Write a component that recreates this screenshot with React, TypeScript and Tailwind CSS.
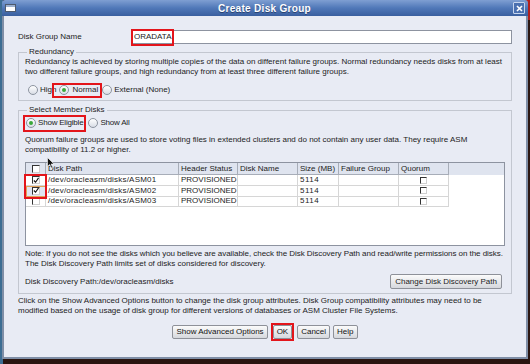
import React from "react";

const F = "font-['Liberation_Sans',Arial,sans-serif]";

function Radio({ on }: { on?: boolean }) {
  return (
    <span className="relative inline-flex h-[10px] w-[10px] shrink-0 items-center justify-center rounded-full border border-[#8d94a0] bg-gradient-to-b from-[#ffffff] to-[#d9dde6]">
      {on && <span className="h-[4px] w-[4px] rounded-full bg-[#3aa83a]" />}
    </span>
  );
}

function Check({ on, small }: { on?: boolean; small?: boolean }) {
  return (
    <span
      className={
        (small ? "h-[7px] w-[7px] " : "h-[8px] w-[8px] ") +
        "inline-flex shrink-0 items-center justify-center border-l border-t border-l-[#333] border-t-[#333] border-r border-b border-r-[#cfcfcf] border-b-[#cfcfcf] bg-white"
      }
    >
      {on && (
        <svg width="7" height="7" viewBox="0 0 7 7">
          <path d="M1 3.5 L3 5.5 L6.5 0.5" stroke="#111" strokeWidth="1.3" fill="none" />
        </svg>
      )}
    </span>
  );
}

function Btn({ children, red }: { children: React.ReactNode; red?: boolean }) {
  return (
    <div className={red ? "border-2 border-[#e3151b] p-0" : ""}>
      <div className="flex h-[14px] items-center rounded-[2px] border border-[#8e9199] bg-gradient-to-b from-[#fbfbfb] to-[#d6d8dd] px-[3px] text-[8px] text-[#111]">
        {children}
      </div>
    </div>
  );
}

const rows = ["/dev/oracleasm/disks/ASM01", "/dev/oracleasm/disks/ASM02", "/dev/oracleasm/disks/ASM03"];

export default function App() {
  return (
    <div className={`${F} relative h-[364px] w-[530px] overflow-hidden bg-[#2a1510]`}>
      <div className="absolute left-0 top-0 h-[364px] w-[3px] bg-[#3c6d93]" />
      <div className="absolute right-0 top-0 h-[20px] w-[4px] bg-[#b3201c]" />
      <div className="relative ml-[2px] flex h-[359px] w-[526px] flex-col">
        {/* title bar */}
        <div className="flex h-[16px] items-center rounded-t-[3px] bg-gradient-to-b from-[#7f9fd2] via-[#5078b8] to-[#3a5f9f] px-[3px]">
          <div className="flex h-[8px] w-[11px] flex-col border border-[#4d5a6e] bg-white">
            <div className="h-[2px] bg-[#9bb0cf]" />
          </div>
          <div className="flex-1 text-center text-[10px] font-bold tracking-[0.3px] text-white [text-shadow:0_1px_0_#2a4270]">
            Create Disk Group
          </div>
          <div className="flex h-[12px] w-[12px] items-center justify-center rounded-[1px] border border-[#c6d5ee] bg-[#4a70b0]">
            <svg width="7" height="7" viewBox="0 0 7 7">
              <path d="M1 1 L6 6 M6 1 L1 6" stroke="white" strokeWidth="1.6" />
            </svg>
          </div>
        </div>
        {/* body */}
        <div className="flex flex-1 flex-col whitespace-nowrap border-x-2 border-b-2 border-[#7f8ea6] bg-[#e8ebf4] px-[14px] text-[8px] leading-[10px] text-[#1c1c1c]">
          <div className="mt-[14px] flex h-[14px] items-center">
            <div className="w-[113px]">Disk Group Name</div>
            <div className="flex h-[14px] flex-1 items-center border border-[#8d93a0] bg-white">
              <span className="-my-[2px] -ml-[1px] flex h-[17px] items-center border-2 border-[#e3151b] px-[1px]">ORADATA</span>
            </div>
          </div>

          <fieldset className="mt-[3px] border border-[#c3c7d0] px-[6px] pb-[4px]">
            <legend className="ml-[2px] px-[2px] leading-[10px]">Redundancy</legend>
            <div>Redundancy is achieved by storing multiple copies of the data on different failure groups. Normal redundancy needs disks from at least</div>
            <div>two different failure groups, and high redundancy from at least three different failure groups.</div>
            <div className="mt-[7px] flex h-[12px] items-center">
              <div className="ml-[3px] flex items-center gap-[2px]">
                <Radio />
                <span>High</span>
              </div>
              <div className="-ml-[4px] flex h-[15px] items-center gap-[3px] border-2 border-[#e3151b] pl-[5px] pr-[2px]">
                <Radio on />
                <span>Normal</span>
              </div>
              <div className="flex items-center gap-[2px]">
                <Radio />
                <span>External (None)</span>
              </div>
            </div>
          </fieldset>

          <fieldset className="mt-[4px] border border-[#c3c7d0] px-[6px] pb-[4px]">
            <legend className="ml-[2px] px-[2px] leading-[10px]">Select Member Disks</legend>
            <div className="relative mt-[1px] flex h-[14px] items-center">
              <div className="-ml-[2px] flex h-[17px] items-center gap-[2px] border-2 border-[#e3151b] pl-[1px] pr-[1px] tracking-[-0.2px]">
                <Radio on />
                <span>Show Eligible</span>
              </div>
              <div className="ml-[2px] flex items-center gap-[2px] tracking-[-0.2px]">
                <Radio />
                <span>Show All</span>
              </div>
            </div>
            <div className="mt-[5px]">Quorum failure groups are used to store voting files in extended clusters and do not contain any user data. They require ASM</div>
            <div>compatibility of 11.2 or higher.</div>

            <div className="relative mt-[7px] h-[84px] border border-[#8d93a0] bg-white">
              <svg className="absolute -top-[6px] left-[21px]" width="8" height="12" viewBox="0 0 8 12">
                <path d="M0.5 0.5 L0.5 9.5 L2.7 7.5 L4.3 11 L5.6 10.4 L4.1 7 L7 7 Z" fill="#111" stroke="#fff" strokeWidth="0.6" />
              </svg>
              <div className="grid h-[12px] grid-cols-[20px_133px_59px_60px_41px_60px_50px_1fr] bg-[#dfe4ef]">
                <div className="flex items-center justify-center border-b border-r border-[#a7adb8]">
                  <Check />
                </div>
                {["Disk Path", "Header Status", "Disk Name", "Size (MB)", "Failure Group", "Quorum"].map((h) => (
                  <div key={h} className="flex items-center border-b border-r border-[#a7adb8] pl-[2px]">
                    {h}
                  </div>
                ))}
                <div />
              </div>
              {rows.map((r, i) => (
                <div key={r} className="grid h-[10.5px] grid-cols-[20px_133px_59px_60px_41px_60px_50px_1fr]">
                  <div className={"flex items-center justify-center border-b border-r border-[#d6d6d6] " + (i === 1 ? "bg-[#dfe6f3] outline outline-1 -outline-offset-1 outline-[#e2a35a]" : "")}>
                    <Check on={i < 2} />
                  </div>
                  <div className="flex items-center border-b border-r border-[#d6d6d6] pl-[2px] tracking-[0.2px]">{r}</div>
                  <div className="flex items-center border-b border-r border-[#d6d6d6] pl-[2px]">PROVISIONED</div>
                  <div className="border-b border-r border-[#d6d6d6]" />
                  <div className="flex items-center border-b border-r border-[#d6d6d6] pl-[2px] tracking-[0.5px]">5114</div>
                  <div className="border-b border-r border-[#d6d6d6]" />
                  <div className="flex items-center justify-center border-b border-r border-[#d6d6d6]">
                    <Check small />
                  </div>
                  <div />
                </div>
              ))}
              <div className="pointer-events-none absolute left-[-2px] top-[11px] h-[25px] w-[23px] border-2 border-[#e3151b]" />
            </div>

            <div className="mt-[3px] tracking-[-0.05px]">Note: If you do not see the disks which you believe are available, check the Disk Discovery Path and read/write permissions on the disks.</div>
            <div>The Disk Discovery Path limits set of disks considered for discovery.</div>
            <div className="mt-[5px] flex h-[15px] items-center justify-between pr-[3px]">
              <span>Disk Discovery Path:/dev/oracleasm/disks</span>
              <div className="flex h-[15px] items-center rounded-[2px] border border-[#8e9199] bg-gradient-to-b from-[#fbfbfb] to-[#d6d8dd] px-[4px]">
                Change Disk Discovery Path
              </div>
            </div>
          </fieldset>

          <div className="mt-[2px]">Click on the Show Advanced Options button to change the disk group attributes. Disk Group compatibility attributes may need to be</div>
          <div>modified based on the usage of disk group for different versions of databases or ASM Cluster File Systems.</div>
          <div className="mt-[7px] flex items-center justify-center gap-[3px]">
            <Btn>Show Advanced Options</Btn>
            <Btn red>OK</Btn>
            <Btn>Cancel</Btn>
            <Btn>Help</Btn>
          </div>
        </div>
      </div>
    </div>
  );
}
